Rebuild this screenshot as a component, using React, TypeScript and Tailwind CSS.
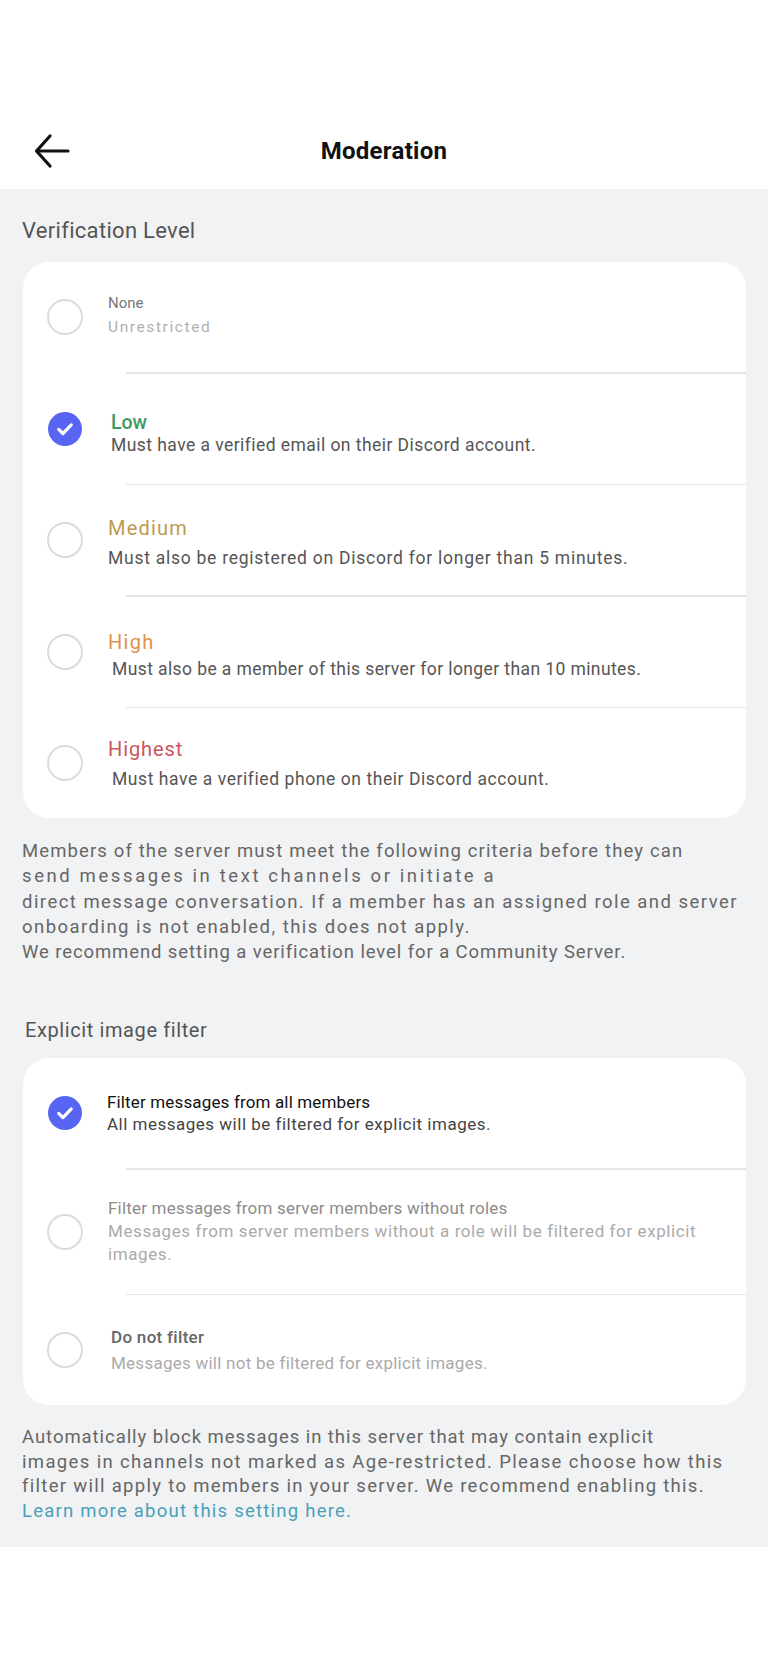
import React from "react";

function Radio() {
  return (
    <div className="w-[36px] h-[36px] shrink-0 rounded-full border-[2px] border-[#dcdcdc] bg-white" />
  );
}

function Checked() {
  return (
    <div className="w-[36px] h-[36px] shrink-0 flex items-center justify-center">
      <div className="w-[34px] h-[34px] rounded-full bg-[#5865f2] flex items-center justify-center">
        <svg width="20" height="20" viewBox="0 0 24 24" fill="none">
          <path d="M4.5 12.5l5 5L19.5 7" stroke="white" strokeWidth="3.8" strokeLinecap="round" strokeLinejoin="round" />
        </svg>
      </div>
    </div>
  );
}

function Divider() {
  return <div className="ml-[103px] h-[1.5px] bg-[#e4e5e7]" />;
}

type RowProps = {
  checked?: boolean;
  height?: string;
  children: React.ReactNode;
};

function Row({ checked, height = "h-[110px]", children }: RowProps) {
  return (
    <div className={`${height} flex items-center pl-[24px] pr-[20px]`}>
      {checked ? <Checked /> : <Radio />}
      <div className="ml-[25px] flex flex-col">{children}</div>
    </div>
  );
}

export default function App() {
  return (
    <div className="w-[768px] min-h-[1664px] bg-white font-['Roboto',_'Noto_Sans',_sans-serif]">
      <header className="h-[189px] bg-white pt-[112px] px-[33px] grid grid-cols-[1fr_auto_1fr] items-center">
        <div className="flex items-center">
          <svg width="38" height="38" viewBox="0 0 38 38" fill="none">
            <path d="M35 19H4" stroke="#111" strokeWidth="3.2" strokeLinecap="round" />
            <path d="M17 4L3.5 19L17 34" stroke="#111" strokeWidth="3.2" strokeLinecap="round" strokeLinejoin="round" />
          </svg>
        </div>
        <h1 className="text-[24px] font-bold text-[#111] tracking-[0.3px]">Moderation</h1>
        <div />
      </header>

      <main className="bg-[#f1f2f4] pb-[24px]">
        <div className="pt-[27px] px-[22px] text-[22px] leading-[30px] text-[#555] tracking-[0.3px]">Verification Level</div>

        <section className="mt-[16px] ml-[23px] mr-[22px] bg-white rounded-[26px] overflow-hidden">
          <Row>
            <div className="pb-[4px] flex flex-col">
              <span className="text-[15px] leading-[20px] text-[#777]">None</span>
              <span className="mt-[4px] text-[15.5px] leading-[20px] text-[#b0b0b0] tracking-[1.6px]">Unrestricted</span>
            </div>
          </Row>
          <Divider />
          <Row checked>
            <div className="pl-[3px] pt-[10px] flex flex-col">
              <span className="text-[19.5px] leading-[22px] font-medium text-[#3e9a63]">Low</span>
              <span className="text-[17.5px] leading-[22px] text-[#555] tracking-[0.44px]">Must have a verified email on their Discord account.</span>
            </div>
          </Row>
          <Divider />
          <Row>
            <div className="pt-[6px] flex flex-col">
              <span className="text-[20px] leading-[24px] text-[#bd9a50] tracking-[1.2px]">Medium</span>
              <span className="mt-[6px] text-[17.5px] leading-[24px] text-[#555] tracking-[0.74px]">Must also be registered on Discord for longer than 5 minutes.</span>
            </div>
          </Row>
          <Divider />
          <Row>
            <div className="pt-[7px] flex flex-col">
              <span className="text-[20px] leading-[24px] text-[#e0914a] tracking-[1.3px]">High</span>
              <span className="mt-[3px] pl-[4px] text-[17.5px] leading-[24px] text-[#555] tracking-[0.4px]">Must also be a member of this server for longer than 10 minutes.</span>
            </div>
          </Row>
          <Divider />
          <Row>
            <div className="pt-[2px] flex flex-col">
              <span className="text-[20px] leading-[24px] text-[#cc5560] tracking-[0.9px]">Highest</span>
              <span className="mt-[6px] pl-[4px] text-[17.5px] leading-[24px] text-[#555] tracking-[0.57px]">Must have a verified phone on their Discord account.</span>
            </div>
          </Row>
        </section>

        <p className="mt-[21px] px-[22px] text-[18.5px] leading-[25.25px] text-[#666] whitespace-nowrap">
          <span className="tracking-[1.12px]">Members of the server must meet the following criteria before they can</span>
          <br />
          <span className="tracking-[2.6px]">send messages in text channels or initiate a</span>
          <br />
          <span className="tracking-[1.46px]">direct message conversation. If a member has an assigned role and server</span>
          <br />
          <span className="tracking-[1.45px]">onboarding is not enabled, this does not apply.</span>
          <br />
          <span className="tracking-[0.9px]">We recommend setting a verification level for a Community Server.</span>
        </p>

        <div className="mt-[52px] px-[25px] text-[20px] leading-[26px] text-[#555] tracking-[0.6px]">Explicit image filter</div>

        <section className="mt-[15px] ml-[23px] mr-[22px] bg-white rounded-[26px] overflow-hidden">
          <Row checked>
            <div className="-ml-[1px] flex flex-col">
              <span className="text-[17px] leading-[22px] text-[#111] tracking-[0.15px]">Filter messages from all members</span>
              <span className="text-[17px] leading-[22px] text-[#444] tracking-[0.5px]">All messages will be filtered for explicit images.</span>
            </div>
          </Row>
          <Divider />
          <Row height="h-[124px]">
            <span className="text-[17px] leading-[23px] text-[#8c8c8c] tracking-[0.2px]">Filter messages from server members without roles</span>
            <span className="text-[17px] leading-[23px] text-[#aaaaaa] tracking-[0.59px] whitespace-nowrap">
              Messages from server members without a role will be filtered for explicit
              <br />
              images.
            </span>
          </Row>
          <Divider />
          <Row>
            <div className="pl-[3px] flex flex-col">
              <span className="text-[17px] leading-[22px] font-medium text-[#666] tracking-[0.3px]">Do not filter</span>
              <span className="mt-[4px] text-[17px] leading-[22px] text-[#aaaaaa] tracking-[0.25px]">Messages will not be filtered for explicit images.</span>
            </div>
          </Row>
        </section>

        <p className="mt-[20px] px-[22px] text-[18.5px] leading-[24.5px] text-[#666] whitespace-nowrap">
          <span className="tracking-[0.95px]">Automatically block messages in this server that may contain explicit</span>
          <br />
          <span className="tracking-[1.36px]">images in channels not marked as Age-restricted. Please choose how this</span>
          <br />
          <span className="tracking-[1.3px]">filter will apply to members in your server. We recommend enabling this.</span>
          <br />
          <span className="text-[#4aa0b8] tracking-[1.24px]">Learn more about this setting here.</span>
        </p>
      </main>
    </div>
  );
}
